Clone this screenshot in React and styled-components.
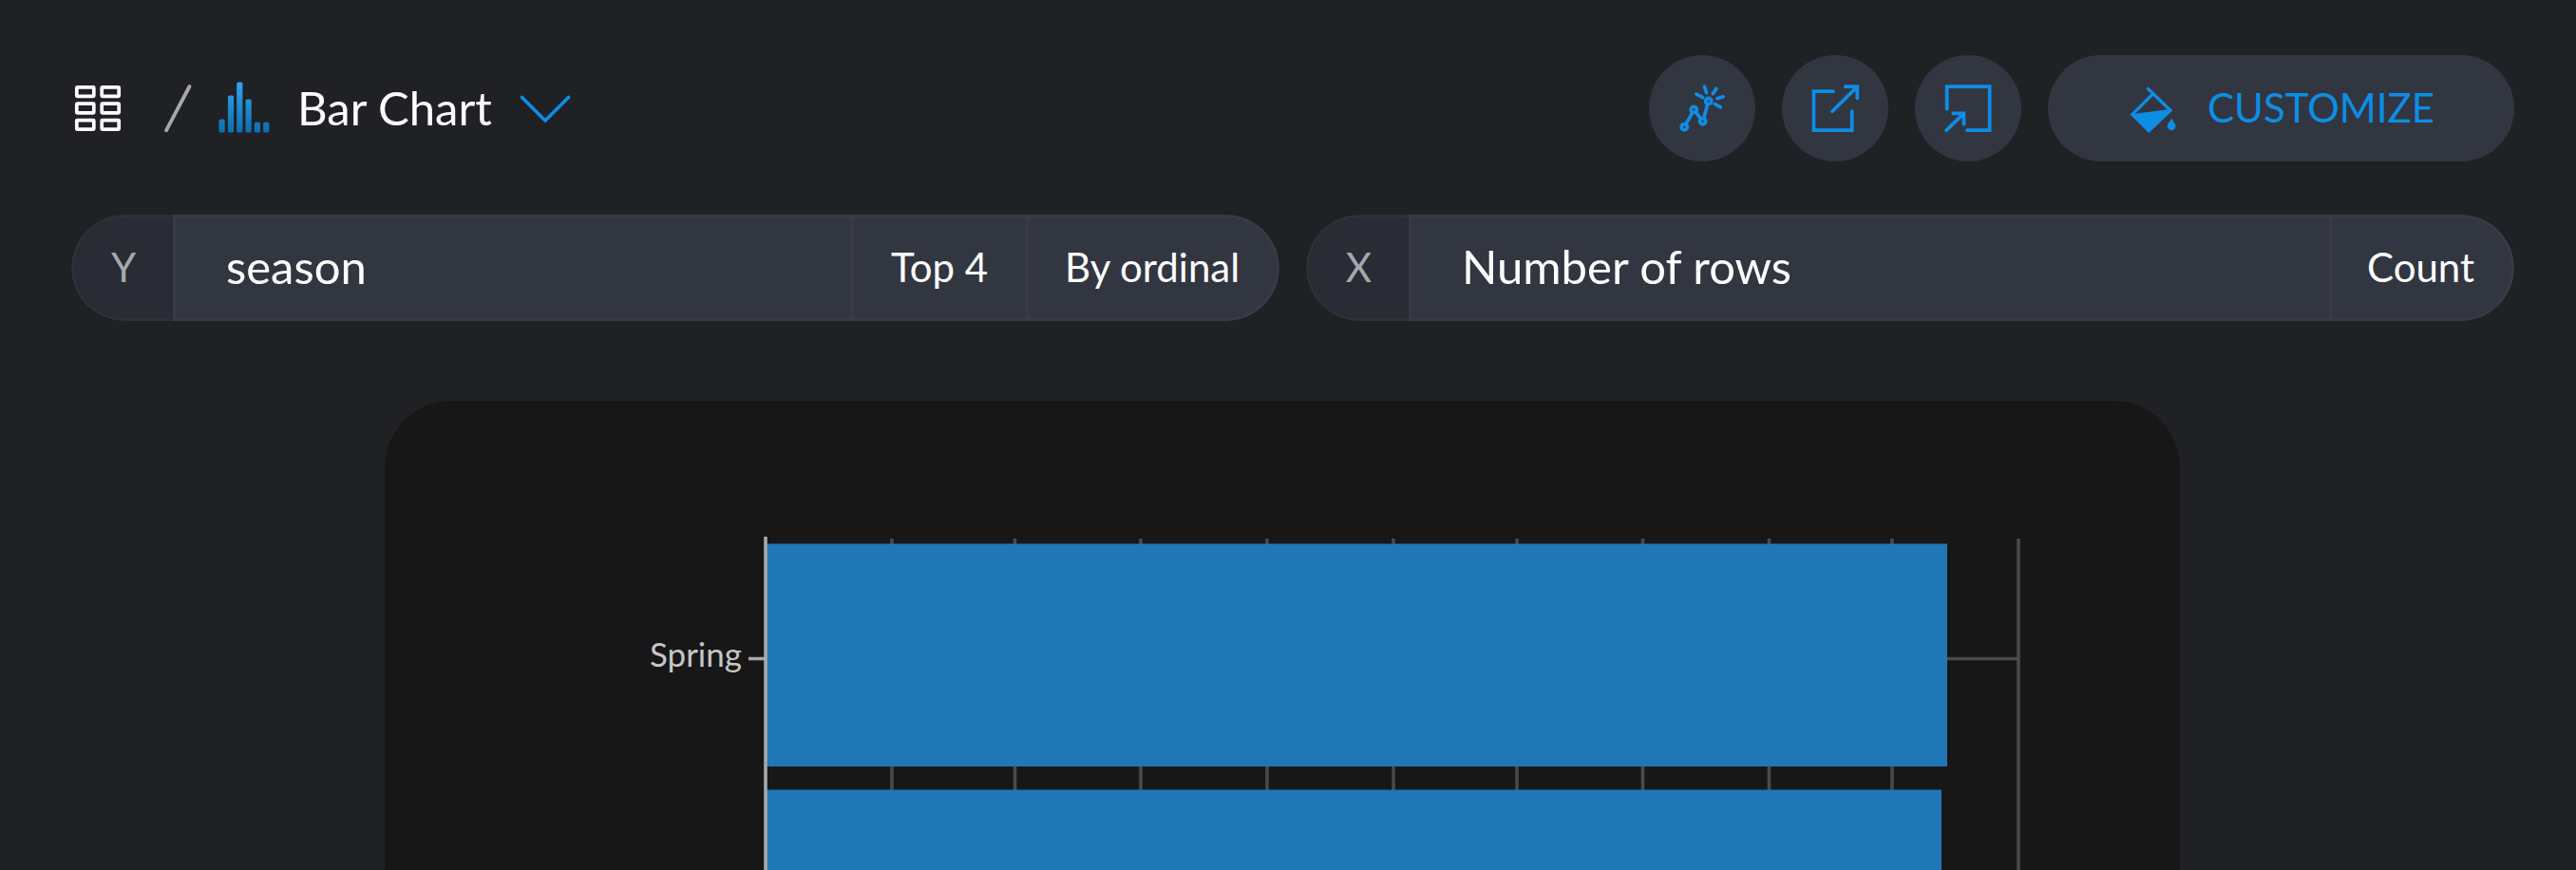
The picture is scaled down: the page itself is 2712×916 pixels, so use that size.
import React from "react";
import styled, { createGlobalStyle } from "styled-components";

const GlobalStyle = createGlobalStyle`
  * { box-sizing: border-box; }
  body { margin: 0; background: #202125; overflow: hidden; }
`;

const Page = styled.main`
  width: 2712px;
  height: 916px;
  overflow: hidden;
  padding: 58px 65px 0 75px;
  display: flex;
  flex-direction: column;
  background: #202125;
  color: #fff;
  font-family: Lato, sans-serif;
`;

const Header = styled.header`
  height: 112px;
  display: flex;
  align-items: center;
  justify-content: space-between;
`;

const Breadcrumb = styled.div`
  display: flex;
  align-items: center;
  height: 112px;
`;

const Icon = styled.svg`
  display: block;
  flex: none;
  width: ${(p) => p.$w || 52}px;
  height: ${(p) => p.$h || 52}px;
  margin-left: ${(p) => p.$gap || 0}px;
  overflow: visible;
  fill: none;
  stroke: ${(p) => p.$color || "#0d8ee5"};
  stroke-width: 3.7;
`;

const ChartName = styled.h1`
  margin: 0 0 0 30px;
  padding-bottom: 2px;
  width: 206px;
  font-size: 49px;
  font-weight: 400;
  line-height: 58px;
  white-space: nowrap;
`;

const Actions = styled.div`
  display: flex;
  gap: 28px;
`;

const RoundButton = styled.button`
  width: 112px;
  height: 112px;
  border: 0;
  border-radius: 50%;
  padding: 0 0 0 32px;
  background: #323641;
`;

const CustomizeButton = styled.button`
  width: 491px;
  height: 112px;
  border: 0;
  border-radius: 56px;
  padding: 0 0 0 87px;
  display: flex;
  align-items: center;
  gap: 29px;
  background: #323641;
  color: #0d8ee5;
  font: 400 42px/50px Lato, sans-serif;
`;

const ButtonLabel = styled.span`
  padding-bottom: 2px;
`;

const Fields = styled.div`
  margin-top: 56px;
  display: flex;
  gap: 28px;
`;

const Field = styled.div`
  flex: 1;
  height: 112px;
  display: flex;
  border-radius: 56px;
  overflow: hidden;
  font-size: 42px;
  line-height: 104px;
  white-space: nowrap;
`;

const AxisLabel = styled.div`
  width: ${(p) => p.$w}px;
  border: 3px solid #2e3037;
  border-right: 0;
  border-radius: 56px 0 0 56px;
  background: #292c34;
  color: #a6a8ae;
  text-align: center;
`;

const FieldName = styled.div`
  flex: 1;
  padding-left: 53px;
  border: 3px solid #383b46;
  border-right: 0;
  background: #323641;
  font-size: 49px;
  line-height: 102px;
`;

const FieldOption = styled.div`
  width: ${(p) => p.$w}px;
  padding-left: ${(p) => p.$pad}px;
  border: 3px solid #383b46;
  border-right-width: ${(p) => (p.$last ? 3 : 0)}px;
  border-radius: ${(p) => (p.$last ? "0 56px 56px 0" : "0")};
  background: #323641;
`;

const ChartCard = styled.section`
  width: 1890px;
  height: 494px;
  flex: none;
  margin: 84px 0 0 330px;
  border-radius: 70px 70px 0 0;
  background: #171717;
`;

const Chart = styled.svg`
  display: block;
  width: 1890px;
  height: 494px;
`;

const gridLines = [939, 1068.5, 1201, 1334, 1467, 1597, 1729.5, 1862.5, 1992, 2125];

const iconBars = [
  [0, 39],
  [9.4, 14],
  [18.7, 0],
  [28, 18],
  [37.3, 42.3],
  [46.7, 42.3],
];

function GridIcon() {
  return (
    <Icon $w={48} $h={48} $gap={4} $color="#fff" viewBox="0 0 48 48">
      {[1.8, 19.2, 36.6].map((y) =>
        [1.8, 28.2].map((x) => (
          <rect key={`${x}-${y}`} x={x} y={y} width="18" height="9.6" rx="0.6" />
        ))
      )}
    </Icon>
  );
}

function BarsIcon() {
  return (
    <Icon $w={53} $h={53} $gap={30} $color="none" viewBox="0 0 53 53">
      <defs>
        <linearGradient id="bars" gradientUnits="userSpaceOnUse" x1="0" y1="0" x2="0" y2="53">
          <stop offset="0" stopColor="#2ea4ec" />
          <stop offset="1" stopColor="#0b6dab" />
        </linearGradient>
      </defs>
      {iconBars.map(([x, y]) => (
        <rect key={x} x={x + 0.5} y={y - 1.5} width="6.2" height={53 - y} rx="1.6" fill="url(#bars)" />
      ))}
    </Icon>
  );
}

function InsightIcon() {
  return (
    <Icon viewBox="0 1.8 52 52" strokeLinecap="round">
      <circle cx="5.3" cy="47.5" r="3.1" />
      <circle cx="15.3" cy="29.2" r="3.1" />
      <circle cx="24.7" cy="41.5" r="3.1" />
      <circle cx="30.7" cy="20.2" r="3.1" />
      <path d="M7 44.5 13.8 32.3M17.3 32l5.4 6.8M25.7 38.2l4-14.6" />
      <path d="M26.5 5l2 6.4M39 7l-3.700 5.400M18 13l6.600 3.400M46.200 15.600l-6.400 1.900M37.300 23.200l6 3.400" />
    </Icon>
  );
}

function OpenIcon() {
  return (
    <Icon viewBox="0 1.8 52 52" strokeLinecap="round">
      <path d="M22 10H1.500V51H41.700V31" />
      <path d="M21 31 47.300 5M34.700 5H47.300V17" />
    </Icon>
  );
}

function CollapseIcon() {
  return (
    <Icon viewBox="0 1.8 52 52" strokeLinecap="round">
      <path d="M1.700 28.500V5H46.700V51H23" />
      <path d="M1.200 51 19.500 33.200M8.200 33.200H19.500V44.500" />
    </Icon>
  );
}

function PaintIcon() {
  return (
    <Icon viewBox="0 0 52 52">
      <path d="M17.500 4.500 42 28.300 19.200 49.700 1.800 32.500 24 10.500" strokeWidth="3.200" />
      <path d="M2 32 42 27 19.200 50.200z" fill="#0d8ee5" stroke="none" />
      <path
        d="M43.200 36.800c2 3.600 4.400 5.400 4.400 8a4.400 4.200 0 0 1-8.800 0c0-2.600 2.400-4.400 4.400-8z"
        fill="#0d8ee5"
        stroke="none"
      />
    </Icon>
  );
}

function BarChart() {
  return (
    <Chart viewBox="405 422 1890 494">
      <g stroke="#4a4a4a" strokeWidth="3.6">
        {gridLines.map((x) => (
          <line key={x} x1={x} x2={x} y1="567" y2="916" />
        ))}
        <line x1="808" x2="2125" y1="693.5" y2="693.5" />
      </g>
      <rect x="807" y="572.5" width="1243" height="234.5" fill="#2077b6" />
      <rect x="807" y="831.5" width="1237" height="90" fill="#2077b6" />
      <path d="M806 565V916M788 693.5H806" stroke="#a8a9ab" strokeWidth="3.6" fill="none" />
      <text x="781" y="702" textAnchor="end" fill="#c6c6c6" fontSize="35" fontFamily="Lato, sans-serif">
        Spring
      </text>
    </Chart>
  );
}

export default function App() {
  return (
    <Page>
      <GlobalStyle />
      <Header>
        <Breadcrumb>
          <GridIcon />
          <Icon $w={25} $h={48} $gap={48} $color="#a6a7a9" viewBox="0 0 25 48" strokeLinecap="round">
            <path d="M0 47.3 24.5 1" strokeWidth="3.8" />
          </Icon>
          <BarsIcon />
          <ChartName>Bar Chart</ChartName>
          <Icon $w={52} $h={30} $gap={29} viewBox="0 0 52 30" strokeLinecap="round">
            <path d="M1.500 3.500 26 28 50.500 3.500" />
          </Icon>
        </Breadcrumb>
        <Actions>
          <RoundButton aria-label="Insights"><InsightIcon /></RoundButton>
          <RoundButton aria-label="Open"><OpenIcon /></RoundButton>
          <RoundButton aria-label="Collapse"><CollapseIcon /></RoundButton>
          <CustomizeButton>
            <PaintIcon />
            <ButtonLabel>CUSTOMIZE</ButtonLabel>
          </CustomizeButton>
        </Actions>
      </Header>
      <Fields>
        <Field>
          <AxisLabel $w={107}>Y</AxisLabel>
          <FieldName>season</FieldName>
          <FieldOption $w={184} $pad={39}>Top 4</FieldOption>
          <FieldOption $w={267} $pad={38} $last>By ordinal</FieldOption>
        </Field>
        <Field>
          <AxisLabel $w={108}>X</AxisLabel>
          <FieldName>Number of rows</FieldName>
          <FieldOption $w={195} $pad={37} $last>Count</FieldOption>
        </Field>
      </Fields>
      <ChartCard>
        <BarChart />
      </ChartCard>
    </Page>
  );
}
